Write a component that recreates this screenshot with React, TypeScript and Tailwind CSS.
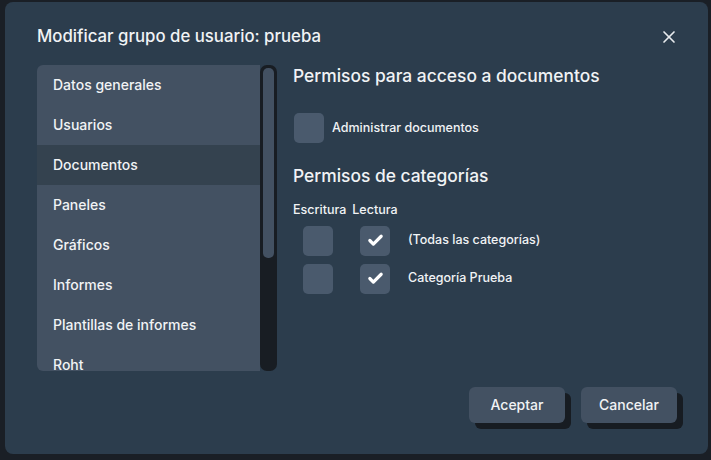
import { X, Check } from "lucide-react";

const sections = [
  "Datos generales",
  "Usuarios",
  "Documentos",
  "Paneles",
  "Gráficos",
  "Informes",
  "Plantillas de informes",
  "Roht",
];

function Box({ checked }: { checked?: boolean }) {
  return (
    <div className="w-[30px] h-[30px] rounded-[5px] bg-[#4a5a6d] flex items-center justify-center shrink-0">
      {checked && <Check size={17} strokeWidth={4.5} className="text-white" />}
    </div>
  );
}

export default function App() {
  return (
    <div
      className="w-[711px] h-[460px] bg-[#1a1f26] pl-[5px] pt-[2px] pr-[3px] pb-[6px]"
      style={{ fontFamily: "Inter, 'Noto Sans', sans-serif" }}
    >
      <div className="h-full rounded-lg bg-[#2c3d4d] text-[#f1f3f5] flex flex-col pl-8 pr-[25px] pt-[23px]">
        <div className="flex items-center justify-between h-6">
          <h2 className="text-[16.8px] font-medium">
            Modificar grupo de usuario: prueba
          </h2>
          <X size={20} strokeWidth={2} className="text-[#e8ebee] mr-[4px]" />
        </div>

        <div className="flex mt-[16px]">
          <div className="flex w-[240px] h-[306px] shrink-0">
            <div className="flex-1 bg-[#435162] rounded-l-md overflow-hidden">
              {sections.map((s) => (
                <div
                  key={s}
                  className={`h-10 flex items-center pl-4 text-sm font-medium ${
                    s === "Documentos" ? "bg-[#34424f]" : ""
                  }`}
                >
                  {s}
                </div>
              ))}
            </div>
            <div className="w-[17px] bg-[#181d23] rounded-[7px] p-[3px] pb-0 flex flex-col">
              <div className="h-[190px] bg-[#435162] rounded-[5px]" />
            </div>
          </div>

          <div className="ml-4 flex flex-col">
            <h3 className="text-[17.4px] font-medium mt-[-1px] leading-6">
              Permisos para acceso a documentos
            </h3>
            <div className="flex items-center gap-2 mt-[25px] ml-px">
              <Box />
              <span className="text-[12.5px] font-medium">Administrar documentos</span>
            </div>
            <h3 className="text-[17.4px] font-medium mt-[21px] leading-6">
              Permisos de categorías
            </h3>
            <div className="flex gap-[6px] text-[12.5px] font-medium mt-[13px]">
              <span>Escritura</span>
              <span>Lectura</span>
            </div>
            <div className="flex flex-col gap-[8px] mt-[6px] ml-[10px]">
              {["(Todas las categorías)", "Categoría Prueba"].map((c) => (
                <div key={c} className="flex items-center">
                  <Box />
                  <div className="ml-[27px]">
                    <Box checked />
                  </div>
                  <span className="ml-[18px] text-[12.5px] font-medium">{c}</span>
                </div>
              ))}
            </div>
          </div>
        </div>

        <div className="flex justify-end gap-4 mt-auto mb-[31px] mr-[6px]">
          {["Aceptar", "Cancelar"].map((b) => (
            <button
              key={b}
              className="w-24 h-9 rounded-md bg-[#435162] text-sm font-medium shadow-[6px_6px_0_#171c22]"
            >
              {b}
            </button>
          ))}
        </div>
      </div>
    </div>
  );
}
